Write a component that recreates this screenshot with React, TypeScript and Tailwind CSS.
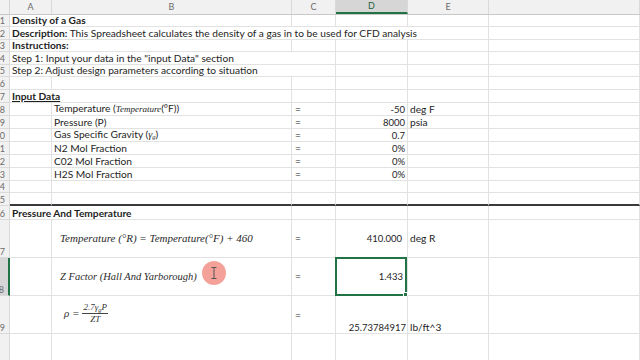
import React from "react";
import clsx from "clsx";

type Cell = {
  text?: React.ReactNode;
  cls?: string;
  /** text runs over into the next cell, so its right gridline is hidden */
  open?: boolean;
};

type Row = {
  n: number;
  h: string;
  cells: Cell[];
  thick?: boolean;
  selected?: boolean;
};

const COL_W = ["w-[42px]", "w-[240px]", "w-[44px]", "w-[72px]", "w-[81px]", "flex-1"];
const COL_LABELS = ["A", "B", "C", "D", "E", ""];

const serif = "font-['Liberation_Serif',serif] italic";

const mid = "items-center";
const bottom = "items-end pb-[1px]";
const num = "justify-end text-[9.5px]";

const EQ: Cell = { text: "=", cls: "items-end pb-[1px] pl-[3px]" };
const EQ_MID: Cell = { text: "=", cls: "items-center pl-[3px]" };

function Fraction() {
  return (
    <span className={clsx("inline-flex items-center gap-[3px] text-[11px] text-[#333]", serif)}>
      <span>ρ =</span>
      <span className="inline-flex flex-col items-center leading-none text-[9px]">
        <span className="border-b border-[#444] px-[1px] pb-[1px]">
          2.7γ<sub className="text-[6.5px]">g</sub>P
        </span>
        <span className="pt-[1px]">ZT</span>
      </span>
    </span>
  );
}

const ROWS: Row[] = [
  {
    n: 1,
    h: "h-[12px]",
    cells: [{ text: <b>Density of a Gas</b>, open: true }, {}, {}, {}, {}, {}],
  },
  {
    n: 2,
    h: "h-[13px]",
    cells: [
      {
        text: (
          <>
            <b>Description:</b> This Spreadsheet calculates the density of a gas in to be used for CFD analysis
          </>
        ),
        open: true,
      },
      { open: true },
      { open: true },
      { open: true },
      {},
      {},
    ],
  },
  {
    n: 3,
    h: "h-[12px]",
    cells: [{ text: <b>Instructions:</b>, open: true }, {}, {}, {}, {}, {}],
  },
  {
    n: 4,
    h: "h-[13px]",
    cells: [{ text: 'Step 1: Input your data in the "input Data" section', open: true }, { open: true }, {}, {}, {}, {}],
  },
  {
    n: 5,
    h: "h-[12px]",
    cells: [{ text: "Step 2: Adjust design parameters according to situation", open: true }, { open: true }, {}, {}, {}, {}],
  },
  { n: 6, h: "h-[13px]", cells: [{}, {}, {}, {}, {}, {}] },
  {
    n: 7,
    h: "h-[13px]",
    cells: [{ text: <b className="underline">Input Data</b>, open: true }, {}, {}, {}, {}, {}],
  },
  {
    n: 8,
    h: "h-[13px]",
    cells: [
      {},
      {
        text: (
          <>
            Temperature (<span className={clsx(serif, "text-[9px]")}>Temperature</span>(°F))
          </>
        ),
      },
      EQ,
      { text: "-50", cls: num },
      { text: "deg F" },
      {},
    ],
  },
  {
    n: 9,
    h: "h-[13px]",
    cells: [{}, { text: "Pressure (P)" }, EQ, { text: "8000", cls: num }, { text: "psia" }, {}],
  },
  {
    n: 10,
    h: "h-[13px]",
    cells: [
      {},
      {
        text: (
          <>
            Gas Specific Gravity (<span className={serif}>γ</span>
            <sub className={clsx(serif, "text-[6.5px]")}>g</sub>)
          </>
        ),
      },
      EQ,
      { text: "0.7", cls: num },
      {},
      {},
    ],
  },
  {
    n: 11,
    h: "h-[13px]",
    cells: [{}, { text: "N2 Mol Fraction" }, EQ, { text: "0%", cls: num }, {}, {}],
  },
  {
    n: 12,
    h: "h-[13px]",
    cells: [{}, { text: "C02 Mol Fraction" }, EQ, { text: "0%", cls: num }, {}, {}],
  },
  {
    n: 13,
    h: "h-[13px]",
    cells: [{}, { text: "H2S Mol Fraction" }, EQ, { text: "0%", cls: num }, {}, {}],
  },
  { n: 14, h: "h-[12px]", cells: [{}, {}, {}, {}, {}, {}] },
  { n: 15, h: "h-[13px]", cells: [{}, {}, {}, {}, {}, {}], thick: true },
  {
    n: 16,
    h: "h-[14px]",
    cells: [{ text: <b>Pressure And Temperature</b>, open: true }, {}, {}, {}, {}, {}],
  },
  {
    n: 17,
    h: "h-[38px]",
    cells: [
      {},
      {
        text: (
          <span className={clsx(serif, "text-[11px] text-[#2a2a2a]")}>
            Temperature (°R) = Temperature(°F) + 460
          </span>
        ),
        cls: clsx(mid, "pl-[8px]"),
      },
      EQ_MID,
      { text: "410.000", cls: clsx(mid, num, "pr-[5px]") },
      { text: "deg R", cls: mid },
      {},
    ],
  },
  {
    n: 18,
    h: "h-[38px]",
    selected: true,
    cells: [
      {},
      {
        text: (
          <span className={clsx(serif, "text-[10.5px] text-[#2a2a2a]")}>Z Factor (Hall And Yarborough)</span>
        ),
        cls: clsx(mid, "pl-[8px]"),
      },
      EQ_MID,
      { text: "1.433", cls: clsx(mid, num, "pr-[4px]") },
      {},
      {},
    ],
  },
  {
    n: 19,
    h: "h-[38px]",
    cells: [
      {},
      { text: <Fraction />, cls: "items-start pt-[7px] pl-[12px]" },
      { ...EQ, cls: "items-start pt-[14px] pl-[3px]" },
      { text: "25.73784917", cls: clsx(bottom, num, "pr-[1px]") },
      { text: "lb/ft^3", cls: bottom },
      {},
    ],
  },
  { n: 20, h: "h-[38px]", cells: [{}, {}, {}, {}, {}, {}] },
];

function ColumnHeader() {
  return (
    <div className="flex h-[15px] bg-[#f1f1f1] border-b border-[#c8c8c8] text-[9px] text-[#6b6b6b]">
      <div className="w-[10px] shrink-0 border-r border-[#d4d4d4]" />
      {COL_LABELS.map((label, i) => (
        <div
          key={i}
          className={clsx(
            "flex items-center justify-center border-r border-[#d9d9d9]",
            COL_W[i],
            i < 5 && "shrink-0",
            label === "D" && "bg-[#d6d6d6] text-[#1f5e3d] border-b-2 border-b-[#217346]"
          )}
        >
          {label}
        </div>
      ))}
    </div>
  );
}

function SheetRow({ row }: { row: Row }) {
  return (
    <div className={clsx("flex", row.h)}>
      <div
        className={clsx(
          "w-[10px] shrink-0 overflow-hidden flex items-end justify-end pr-[4px] pb-[1px] border-b border-[#dadada] text-[9px] text-[#6b6b6b]",
          row.selected ? "bg-[#d6d6d6] border-r-2 border-r-[#217346]" : "bg-[#f1f1f1] border-r border-[#d4d4d4]"
        )}
      >
        <span className="shrink-0 leading-none">{row.n}</span>
      </div>
      {row.cells.map((cell, i) => (
        <div
          key={i}
          className={clsx(
            "relative flex px-[2px] whitespace-nowrap",
            COL_W[i],
            i < 5 && "shrink-0",
            row.thick ? "border-b-2 border-b-[#3a3a3a]" : "border-b border-[#e2e2e2]",
            !cell.open && "border-r border-r-[#e2e2e2]",
            cell.cls ?? "items-end pb-[1px]",
            cell.cls && !cell.cls.includes("items-") && "items-end pb-[1px]"
          )}
        >
          {cell.text !== undefined && <span className="relative z-10 leading-none">{cell.text}</span>}
          {row.selected && i === 3 && (
            <div className="absolute -left-[1px] -top-[1px] right-0 -bottom-[1px] border-2 border-[#217346] pointer-events-none">
              <div className="absolute -right-[3px] -bottom-[3px] w-[5px] h-[5px] bg-[#217346] border border-white" />
            </div>
          )}
        </div>
      ))}
    </div>
  );
}

export default function App() {
  return (
    <div className="relative w-[640px] h-[360px] overflow-hidden bg-white text-[#1e1e1e] text-[10.2px] font-['Lato','Open_Sans',sans-serif]">
      <ColumnHeader />
      {ROWS.map((row) => (
        <SheetRow key={row.n} row={row} />
      ))}

      {/* click highlight from the screen recorder */}
      <div className="absolute left-[202px] top-[261px] w-[24px] h-[24px] rounded-full bg-[#f07a6e]/70 flex items-center justify-center z-20">
        <svg width="6" height="12" viewBox="0 0 6 12" fill="none" stroke="#555" strokeWidth="1">
          <path d="M0.5 0.5h5M3 0.5v11M0.5 11.5h5" />
        </svg>
      </div>
    </div>
  );
}
